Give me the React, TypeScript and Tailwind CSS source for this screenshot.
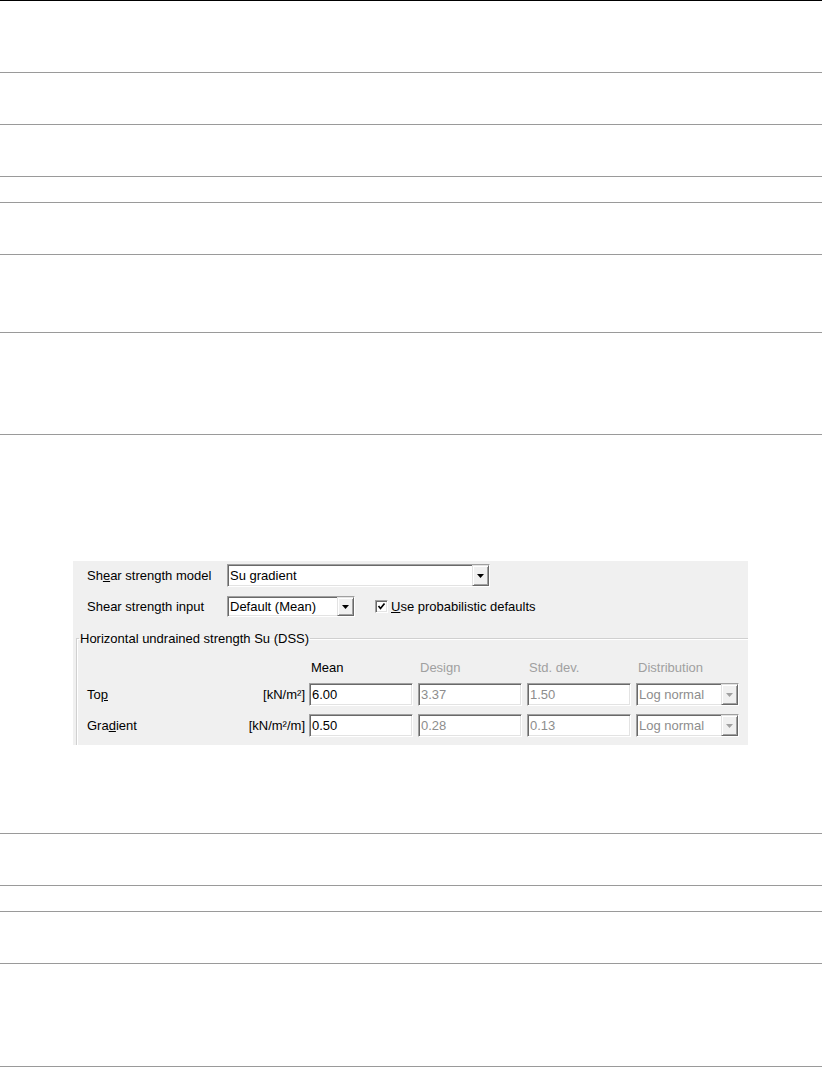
import clsx from "clsx"

const sunken =
  "border border-t-[#a0a0a0] border-l-[#a0a0a0] border-r-white border-b-white shadow-[inset_1px_1px_0_#696969,inset_-1px_-1px_0_#e3e3e3]"
const raised =
  "border border-t-[#e3e3e3] border-l-[#e3e3e3] border-r-[#696969] border-b-[#696969] shadow-[inset_1px_1px_0_#ffffff,inset_-1px_-1px_0_#a0a0a0]"

function Arrow({ disabled }: { disabled?: boolean }) {
  return (
    <div className={clsx("flex h-full w-[17px] shrink-0 items-center justify-center bg-[#f0f0f0]", raised)}>
      <svg width="7" height="4" viewBox="0 0 7 4">
        <path d="M0 0h7L3.5 4z" fill={disabled ? "#a0a0a0" : "#000000"} />
      </svg>
    </div>
  )
}

function Field({ value, disabled }: { value: string; disabled?: boolean }) {
  return (
    <div
      className={clsx(
        "flex h-[23px] w-[104px] items-center bg-white pl-[2px]",
        sunken,
        disabled ? "text-[#8d8d8d]" : "text-black"
      )}
    >
      {value}
    </div>
  )
}

function Combo({ value, width, disabled }: { value: string; width: string; disabled?: boolean }) {
  return (
    <div className={clsx("flex h-full items-stretch bg-white", sunken, width)}>
      <div className={clsx("flex flex-1 items-center pl-[2px]", disabled ? "text-[#8d8d8d]" : "text-black")}>{value}</div>
      <Arrow disabled={disabled} />
    </div>
  )
}

function ShearDialog() {
  return (
    <div className="h-[184px] w-[675px] overflow-hidden bg-[#f0f0f0] text-[13px] leading-[15px] text-black">
      {/* model */}
      <div className="mt-[3px] flex h-[23px] items-center">
        <span className="w-[154px] pl-[14px]">
          Sh<span className="underline">e</span>ar strength model
        </span>
        <Combo value="Su gradient" width="w-[263px]" />
      </div>

      {/* input */}
      <div className="mt-[9px] flex h-[21px] items-center">
        <span className="w-[154px] pl-[14px]">
          Shear stren<span className="underline">g</span>th input
        </span>
        <Combo value="Default (Mean)" width="w-[128px]" />
        <div className={clsx("ml-[20px] flex h-[13px] w-[13px] items-center justify-center bg-white", sunken)}>
          <svg width="9" height="9" viewBox="0 0 9 9">
            <polyline points="1.5,4 3.5,6.5 7.5,1.5" fill="none" stroke="#000" strokeWidth="1.7" />
          </svg>
        </div>
        <span className="ml-[3px]">
          <span className="underline">U</span>se probabilistic defaults
        </span>
      </div>

      {/* group */}
      <fieldset className="ml-[3px] mt-[14px] w-[720px] border-l border-t border-[#d0d0d0] pb-4 shadow-[inset_1px_1px_0_#ffffff]">
        <legend className="ml-[2px] px-px">Horizontal undrained strength Su (DSS)</legend>
        <div className="pl-[10px]">
          <div className="mt-[14px] flex">
            <div className="w-[222px]" />
            <div className="flex gap-[5px]">
              <span className="w-[104px] pl-[2px]">Mean</span>
              <span className="w-[104px] pl-[2px] text-[#a0a0a0]">Design</span>
              <span className="w-[104px] pl-[2px] text-[#a0a0a0]">Std. dev.</span>
              <span className="w-[104px] pl-[2px] text-[#a0a0a0]">Distribution</span>
            </div>
          </div>

          <div className="mt-[8px] flex flex-col gap-[8px]">
            {[
              { label: <>To<span className="underline">p</span></>, unit: "[kN/m²]", vals: ["6.00", "3.37", "1.50"] },
              { label: <>Gra<span className="underline">d</span>ient</>, unit: "[kN/m²/m]", vals: ["0.50", "0.28", "0.13"] },
            ].map((r, i) => (
              <div key={i} className="flex h-[23px] items-center">
                <div className="flex w-[218px] justify-between">
                  <span>{r.label}</span>
                  <span>{r.unit}</span>
                </div>
                <div className="ml-[4px] flex gap-[5px]">
                  <Field value={r.vals[0]} />
                  <Field value={r.vals[1]} disabled />
                  <Field value={r.vals[2]} disabled />
                  <div className="h-[23px]">
                    <Combo value="Log normal" width="w-[103px]" disabled />
                  </div>
                </div>
              </div>
            ))}
          </div>
        </div>
      </fieldset>
    </div>
  )
}

export default function App() {
  const before = ["h-[52px]", "h-[52px]", "h-[26px]", "h-[52px]", "h-[78px]", "h-[102px]"]
  const after = ["h-[52px]", "h-[26px]", "h-[52px]", "h-[103px]"]

  return (
    <div className="w-full bg-white font-['Liberation_Sans',Arial,sans-serif]">
      <div className="h-[73px] border-t border-b border-t-black border-b-[#9a9a9a]" />
      {before.map((h, i) => (
        <div key={i} className={clsx(h, "border-b border-[#9a9a9a]")} />
      ))}

      <div className="h-[399px] border-b border-[#9a9a9a] pl-[73px] pt-[126px]">
        <ShearDialog />
      </div>

      {after.map((h, i) => (
        <div key={i} className={clsx(h, "border-b border-[#9a9a9a]")} />
      ))}
    </div>
  )
}
